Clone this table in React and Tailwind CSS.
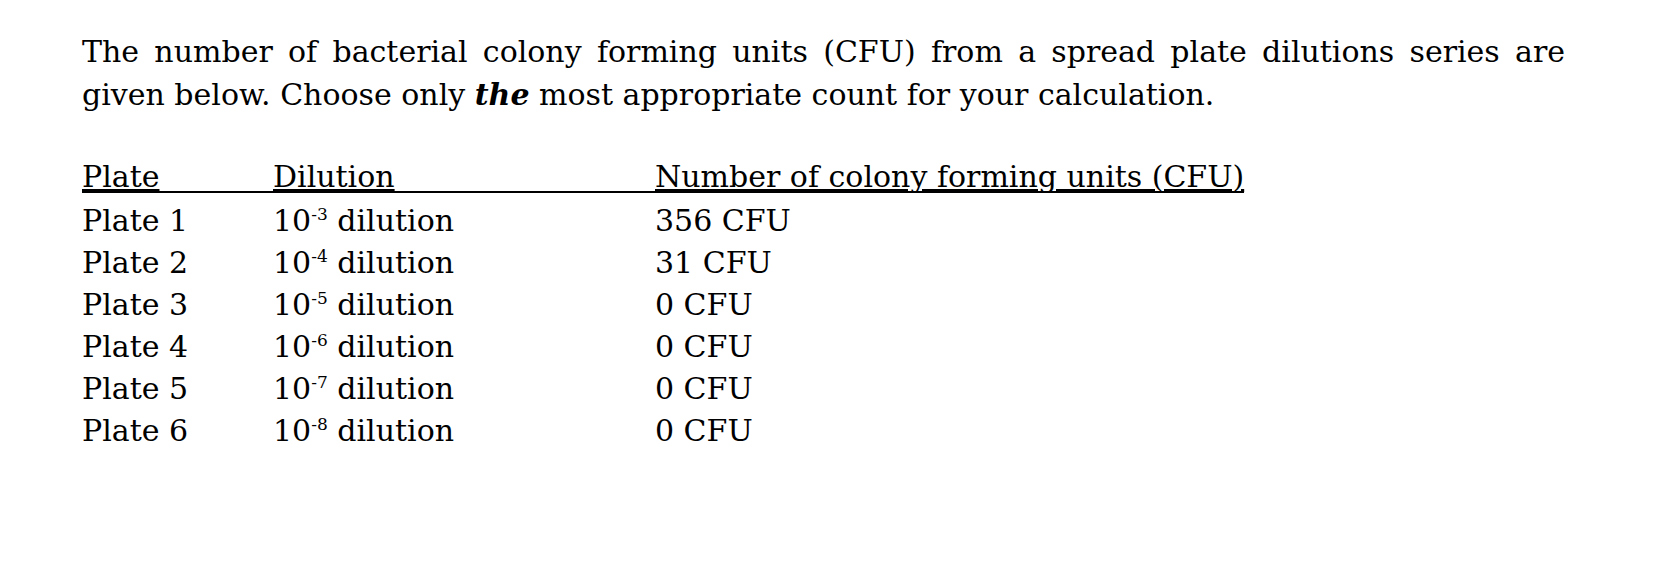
const rows = [
  { plate: "Plate 1", exp: "-3", cfu: "356 CFU" },
  { plate: "Plate 2", exp: "-4", cfu: "31 CFU" },
  { plate: "Plate 3", exp: "-5", cfu: "0 CFU" },
  { plate: "Plate 4", exp: "-6", cfu: "0 CFU" },
  { plate: "Plate 5", exp: "-7", cfu: "0 CFU" },
  { plate: "Plate 6", exp: "-8", cfu: "0 CFU" },
];

export default function App() {
  return (
    <div
      className="w-[1660px] h-[576px] bg-white text-black pl-[82px] pt-[30px]"
      style={{ fontFamily: '"DejaVu Serif", "Liberation Serif", serif' }}
    >
      {/* intro, first line justified to the right edge */}
      <div className="w-[1483px] text-[30px] leading-[43px]">
        <p className="text-justify [text-align-last:justify] whitespace-nowrap">
          The number of bacterial colony forming units (CFU) from a spread plate dilutions series are
        </p>
        <p className="whitespace-nowrap">
          given below. Choose only <b className="italic font-bold">the</b> most appropriate count for your calculation.
        </p>
      </div>

      <div className="mt-[47px] w-fit text-[30px]">
        <div className="flex leading-[28px] border-b-2 border-black">
          <span className="w-[191px] underline">Plate</span>
          <span className="w-[382px] underline">Dilution</span>
          <span className="underline">Number of colony forming units (CFU)</span>
        </div>
        <div className="mt-[7px]">
          {rows.map((r) => (
            <div key={r.plate} className="flex leading-[42px]">
              <span className="w-[191px]">{r.plate}</span>
              <span className="w-[382px]">
                10<sup className="text-[17px] relative -top-[11px]">{r.exp}</sup> dilution
              </span>
              <span>{r.cfu}</span>
            </div>
          ))}
        </div>
      </div>
    </div>
  );
}
